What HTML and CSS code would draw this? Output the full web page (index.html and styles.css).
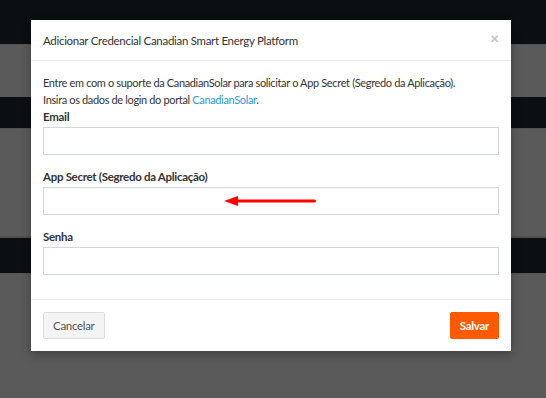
FILE: index.html
```html
<!DOCTYPE html>
<html lang="pt-BR">
<head>
    <meta charset="UTF-8">
    <meta name="viewport" content="width=device-width, initial-scale=1.0">
    <title>Adicionar Credencial</title>
    <link rel="stylesheet" href="styles.css">
</head>
<body>
    <div class="page">
        <div class="band dark" style="height: 44px"></div>
        <div class="band grey" style="height: 53px"></div>
        <div class="band dark" style="height: 31px"></div>
        <div class="band grey lined" style="height: 110px"></div>
        <div class="band dark" style="height: 35px"></div>
        <div class="band grey" style="height: 125px"></div>
    </div>

    <div class="modal">
        <div class="modal-header">
            <span class="modal-title">Adicionar Credencial Canadian Smart Energy Platform</span>
            <span class="close">&times;</span>
        </div>
        <div class="modal-body">
            <p class="intro">Entre em com o suporte da CanadianSolar para solicitar o App Secret (Segredo da Aplicação).<br>
            Insira os dados de login do portal <a href="#">CanadianSolar</a>.</p>

            <label>Email</label>
            <input type="text" class="field">

            <label>App Secret (Segredo da Aplicação)</label>
            <div class="field-wrap">
                <input type="text" class="field">
                <svg class="arrow" width="92" height="10" viewBox="0 0 92 10">
                    <polygon points="0,5 14,0 14,10" fill="#ff0000"/>
                    <rect x="12" y="3.5" width="80" height="3" rx="1.5" fill="#ff0000"/>
                </svg>
            </div>

            <label>Senha</label>
            <input type="password" class="field last">
        </div>
        <div class="modal-footer">
            <button class="btn btn-default">Cancelar</button>
            <button class="btn btn-primary">Salvar</button>
        </div>
    </div>
</body>
</html>
```

FILE: styles.css
```css
body {
    margin: 0;
    font-family: 'Lato', 'Open Sans', sans-serif;
    font-size: 11.5px;
    letter-spacing: -0.3px;
    color: #333;
    background: #575757;
}
.page {
    width: 546px;
    height: 398px;
    overflow: hidden;
}
.band.dark {
    background: #0b0f11;
}
.band.grey {
    background: #5a5a5a;
    border-top: 1px solid #545454;
    box-sizing: border-box;
}
.band.lined {
    border-bottom: 2px solid #4e4e4e;
}
.modal {
    position: absolute;
    left: 31px;
    top: 20px;
    width: 480px;
    background: #fff;
    box-shadow: 0 3px 9px rgba(0, 0, 0, 0.3);
}
.modal-header {
    height: 40px;
    padding: 0 12px;
    border-bottom: 1px solid #eee;
    display: flex;
    align-items: center;
    justify-content: space-between;
}
.modal-title {
    color: #333;
}
.close {
    color: #c4c4c4;
    font-size: 16px;
    font-weight: bold;
    margin-right: 0;
    margin-top: -5px;
}
.modal-body {
    padding: 13px 12px 24px;
    display: flex;
    flex-direction: column;
}
.intro {
    margin: 0;
    font-size: 11px;
    letter-spacing: -0.35px;
    line-height: 17px;
}
.intro a {
    color: #2b9ad8;
    text-decoration: none;
}
label {
    font-weight: bold;
    line-height: 17px;
    margin-bottom: 2px;
}
.field {
    display: block;
    box-sizing: border-box;
    width: 100%;
    height: 28px;
    margin: 0 0 13px;
    border: 1px solid #d2d6de;
    border-radius: 0;
    background: #fff;
    padding: 4px 8px;
}
.field.last {
    margin-bottom: 0;
}
.field-wrap {
    position: relative;
}
.arrow {
    position: absolute;
    left: 181px;
    top: 9px;
}
.modal-footer {
    border-top: 1px solid #eee;
    padding: 12px;
    display: flex;
    justify-content: space-between;
}
.btn {
    height: 27px;
    padding: 0 9px;
    font-family: inherit;
    font-size: 11.5px;
    letter-spacing: -0.3px;
    border-radius: 2px;
    cursor: pointer;
}
.btn-default {
    background: #f4f4f4;
    border: 1px solid #ddd;
    color: #555;
}
.btn-primary {
    background: #ff5a00;
    border: 1px solid #ff5a00;
    color: #fff;
    font-weight: bold;
}
```
